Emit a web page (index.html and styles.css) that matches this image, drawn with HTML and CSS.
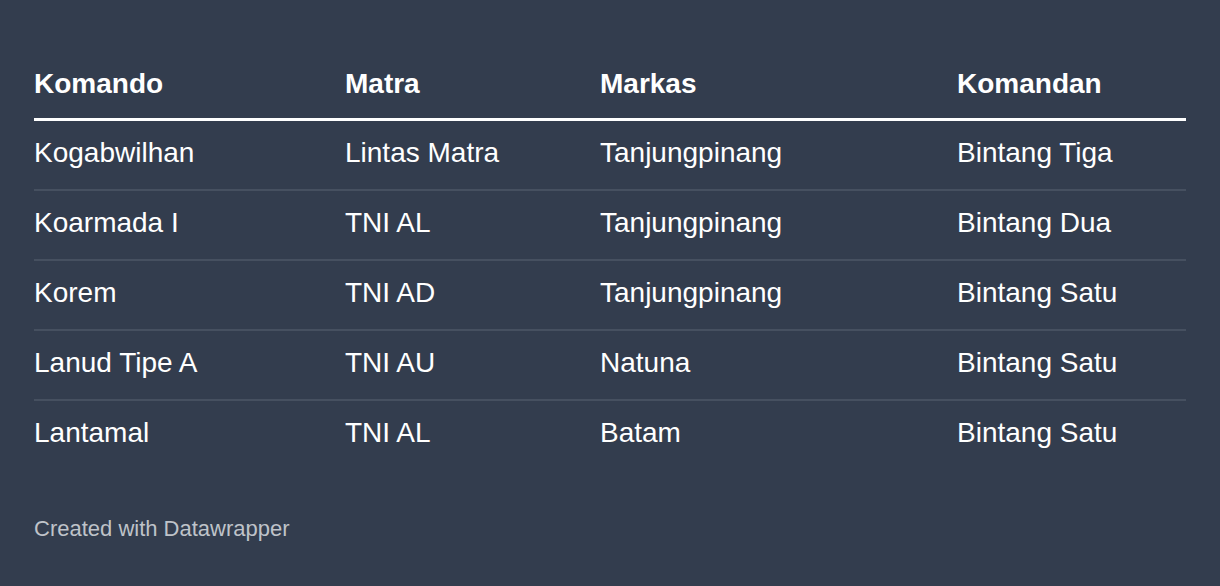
FILE: index.html
```html
<!DOCTYPE html>
<html lang="id">
<head>
<meta charset="utf-8">
<title>Komando</title>
<link rel="stylesheet" href="styles.css">
</head>
<body>
<div class="chart">
  <table class="dw-table">
    <thead>
      <tr>
        <th class="c1">Komando</th>
        <th class="c2">Matra</th>
        <th class="c3">Markas</th>
        <th class="c4">Komandan</th>
      </tr>
    </thead>
    <tbody>
      <tr><td>Kogabwilhan</td><td>Lintas Matra</td><td>Tanjungpinang</td><td>Bintang Tiga</td></tr>
      <tr><td>Koarmada I</td><td>TNI AL</td><td>Tanjungpinang</td><td>Bintang Dua</td></tr>
      <tr><td>Korem</td><td>TNI AD</td><td>Tanjungpinang</td><td>Bintang Satu</td></tr>
      <tr><td>Lanud Tipe A</td><td>TNI AU</td><td>Natuna</td><td>Bintang Satu</td></tr>
      <tr class="last"><td>Lantamal</td><td>TNI AL</td><td>Batam</td><td>Bintang Satu</td></tr>
    </tbody>
  </table>
  <div class="footer">Created with Datawrapper</div>
</div>
</body>
</html>
```
FILE: styles.css
```css
html, body {
  margin: 0;
  padding: 0;
  background: #333d4e;
}
body {
  font-family: "Liberation Sans", Arial, sans-serif;
  color: #ffffff;
}
.chart {
  padding: 68px 34px 0 34px;
}
.dw-table {
  width: 1152px;
  border-collapse: collapse;
  table-layout: fixed;
}
.dw-table th,
.dw-table td {
  text-align: left;
  font-size: 28px;
  line-height: 32px;
  padding: 0;
  white-space: nowrap;
}
.dw-table th {
  font-weight: bold;
  padding-bottom: 18px;
  border-bottom: 3px solid #ffffff;
}
.c1 { width: 311px; }
.c2 { width: 255px; }
.c3 { width: 357px; }
.c4 { width: 229px; }
.dw-table td {
  padding-top: 16px;
  padding-bottom: 20px;
  border-bottom: 2px solid #465060;
}
.dw-table tr.last td {
  border-bottom: none;
}
.footer {
  margin-top: 47px;
  font-size: 22px;
  line-height: 26px;
  color: #bfc3c9;
}
```
